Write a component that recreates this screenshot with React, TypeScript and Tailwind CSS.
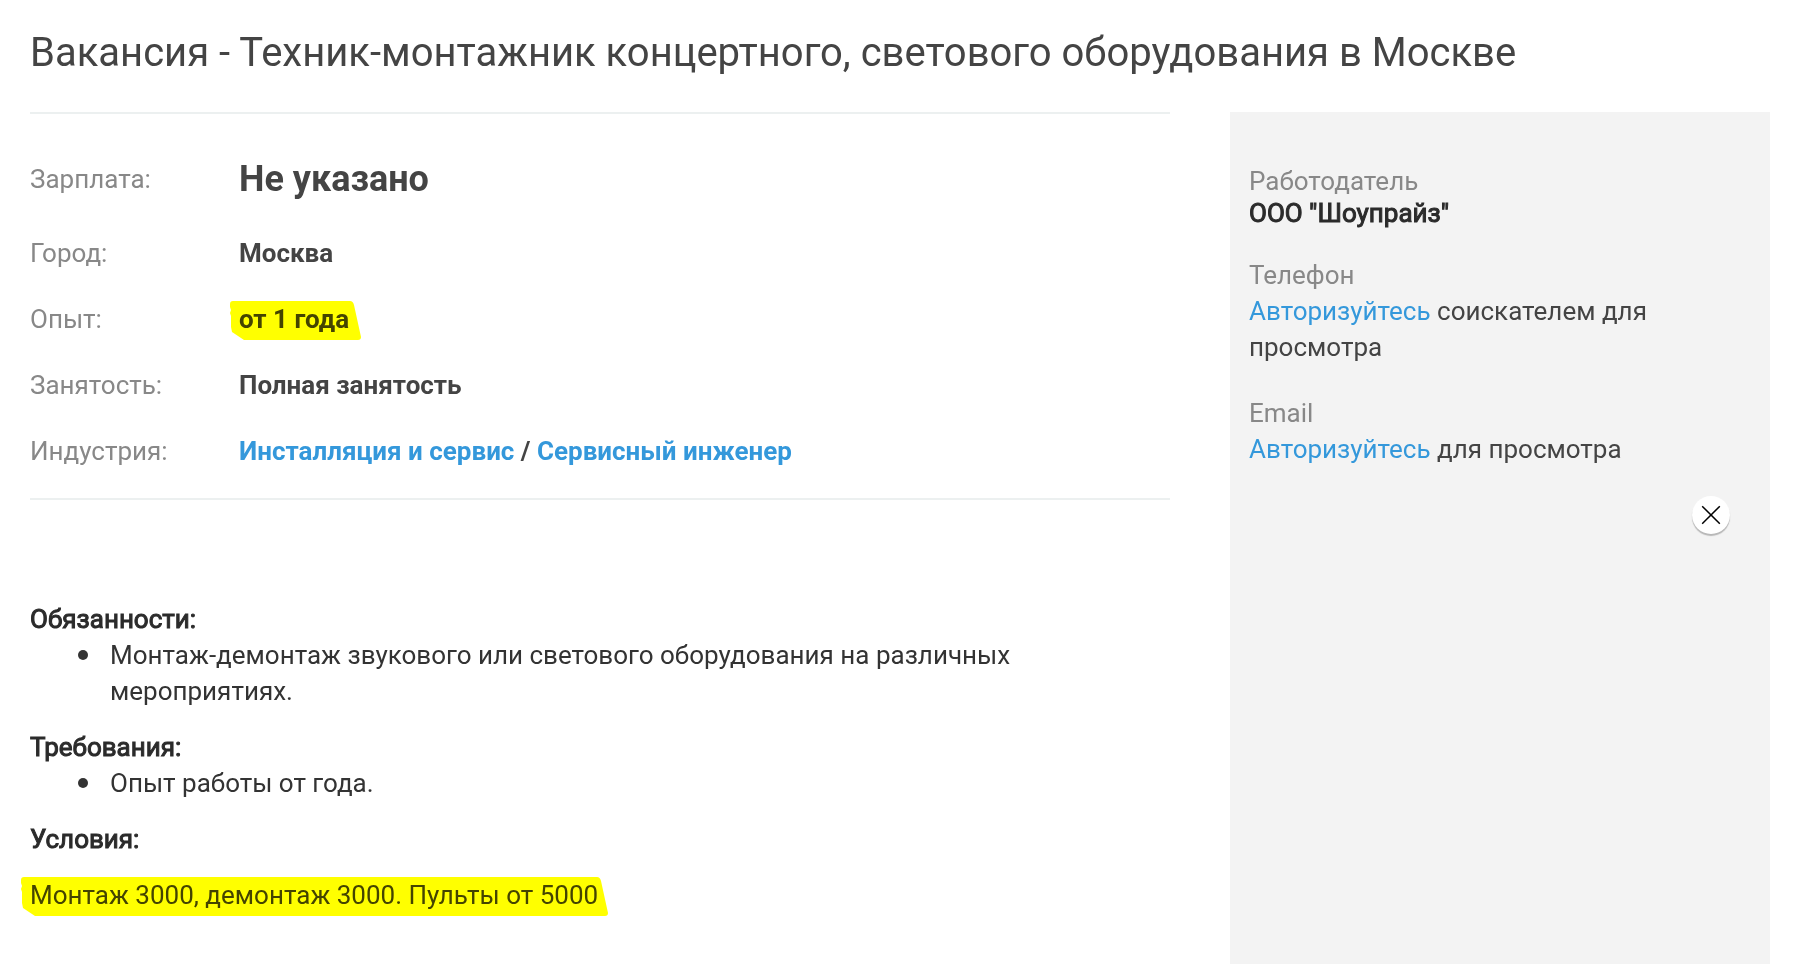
import type { ReactNode } from "react";

type Field = {
  label: string;
  value: ReactNode;
};

const fields: Field[] = [
  { label: "Город:", value: "Москва" },
  { label: "Опыт:", value: <Marker width={131}>от 1 года</Marker> },
  { label: "Занятость:", value: "Полная занятость" },
  {
    label: "Индустрия:",
    value: (
      <>
        <TextLink>Инсталляция и сервис</TextLink> / <TextLink>Сервисный инженер</TextLink>
      </>
    ),
  },
];

export default function App() {
  return (
    <div className="flex min-h-screen flex-col bg-white px-[30px] font-[Roboto,sans-serif] text-[26px] leading-9 text-[#444444]">
      <h1 className="pt-[27px] pb-[33px] text-[40px] leading-[52px]">
        Вакансия - Техник-монтажник концертного, светового оборудования в Москве
      </h1>

      <div className="grid flex-1 grid-cols-[19fr_9fr] gap-[60px]">
        <main>
          <dl className="border-y-2 border-[#ecf0f0] pt-[47px] pb-[14px]">
            <div className="flex items-center pb-[23px]">
              <dt className="w-[209px] shrink-0 text-[#888888]">Зарплата:</dt>
              <dd className="text-[36px] leading-9 font-bold">Не указано</dd>
            </div>
            {fields.map((field) => (
              <div key={field.label} className="flex items-center py-[15px]">
                <dt className="w-[209px] shrink-0 text-[#888888]">{field.label}</dt>
                <dd className="font-bold">{field.value}</dd>
              </div>
            ))}
          </dl>

          <div className="pt-[101px] text-[#333333]">
            <Section title="Обязанности:">
              Монтаж-демонтаж звукового или светового оборудования на различных мероприятиях.
            </Section>
            <Section title="Требования:">Опыт работы от года.</Section>
            <h2 className="font-normal text-[#2b2b2b] [-webkit-text-stroke:1px]">Условия:</h2>
            <p className="mt-5 text-[#444444]">
              <Marker width={587}>Монтаж 3000, демонтаж 3000. Пульты от 5000</Marker>
            </p>
          </div>
        </main>

        <aside className="bg-[#f3f3f3] px-[19px] pt-[51px]">
          <h2 className="text-[#888888]">Работодатель</h2>
          <p className="leading-7 text-[#2b2b2b] [-webkit-text-stroke:1px]">ООО "Шоупрайз"</p>

          <h2 className="mt-[30px] text-[#888888]">Телефон</h2>
          <p className="w-[440px] max-w-full">
            <TextLink>Авторизуйтесь</TextLink> соискателем для просмотра
          </p>

          <h2 className="mt-[30px] text-[#888888]">Email</h2>
          <p>
            <TextLink>Авторизуйтесь</TextLink> для просмотра
          </p>

          <div className="mt-[29px] flex justify-end pr-[21px]">
            <button
              type="button"
              aria-label="Закрыть"
              className="flex size-[38px] items-center justify-center rounded-full bg-white shadow-[0_2px_1px_rgba(0,0,0,0.25)]"
            >
              <CloseIcon />
            </button>
          </div>
        </aside>
      </div>
    </div>
  );
}

function Section({ title, children }: { title: string; children: ReactNode }) {
  return (
    <section className="mb-5">
      <h2 className="font-normal text-[#2b2b2b] [-webkit-text-stroke:1px]">{title}</h2>
      <ul className="pl-12">
        <li className="flex max-w-[960px] gap-[22px] before:mt-[13px] before:size-[10px] before:shrink-0 before:rounded-full before:bg-[#333333]">
          {children}
        </li>
      </ul>
    </section>
  );
}

function TextLink({ children }: { children: ReactNode }) {
  return (
    <a href="#" className="text-[#3498db] hover:underline">
      {children}
    </a>
  );
}

// Felt-tip stroke laid over the text, multiplied so the letters stay readable
function Marker({ width, children }: { width: number; children: ReactNode }) {
  const stroke = [
    "M3 0",
    `H${width - 11}`,
    `Q${width - 8} 0 ${width - 7} 4`,
    `L${width} 36`,
    `Q${width} 39 ${width - 3} 39`,
    "H14",
    "L2 31 L1 26 L1 15 L0 12 L1 9 L0 6 L0 3",
    "Q0 0 3 0Z",
  ].join(" ");

  return (
    <mark className="relative inline-block bg-transparent text-inherit">
      {children}
      <svg
        width={width}
        height="39"
        viewBox={`0 0 ${width} 39`}
        className="pointer-events-none absolute top-0 -left-[9px] max-w-none mix-blend-multiply"
        aria-hidden="true"
      >
        <path d={stroke} fill="#ffff00" />
      </svg>
    </mark>
  );
}

function CloseIcon() {
  return (
    <svg width="20" height="20" viewBox="0 0 20 20" fill="none" stroke="#000000" strokeWidth="1.5" aria-hidden="true">
      <path d="M1.2 1.2 18.8 18.8M18.8 1.2 1.2 18.8" />
    </svg>
  );
}
